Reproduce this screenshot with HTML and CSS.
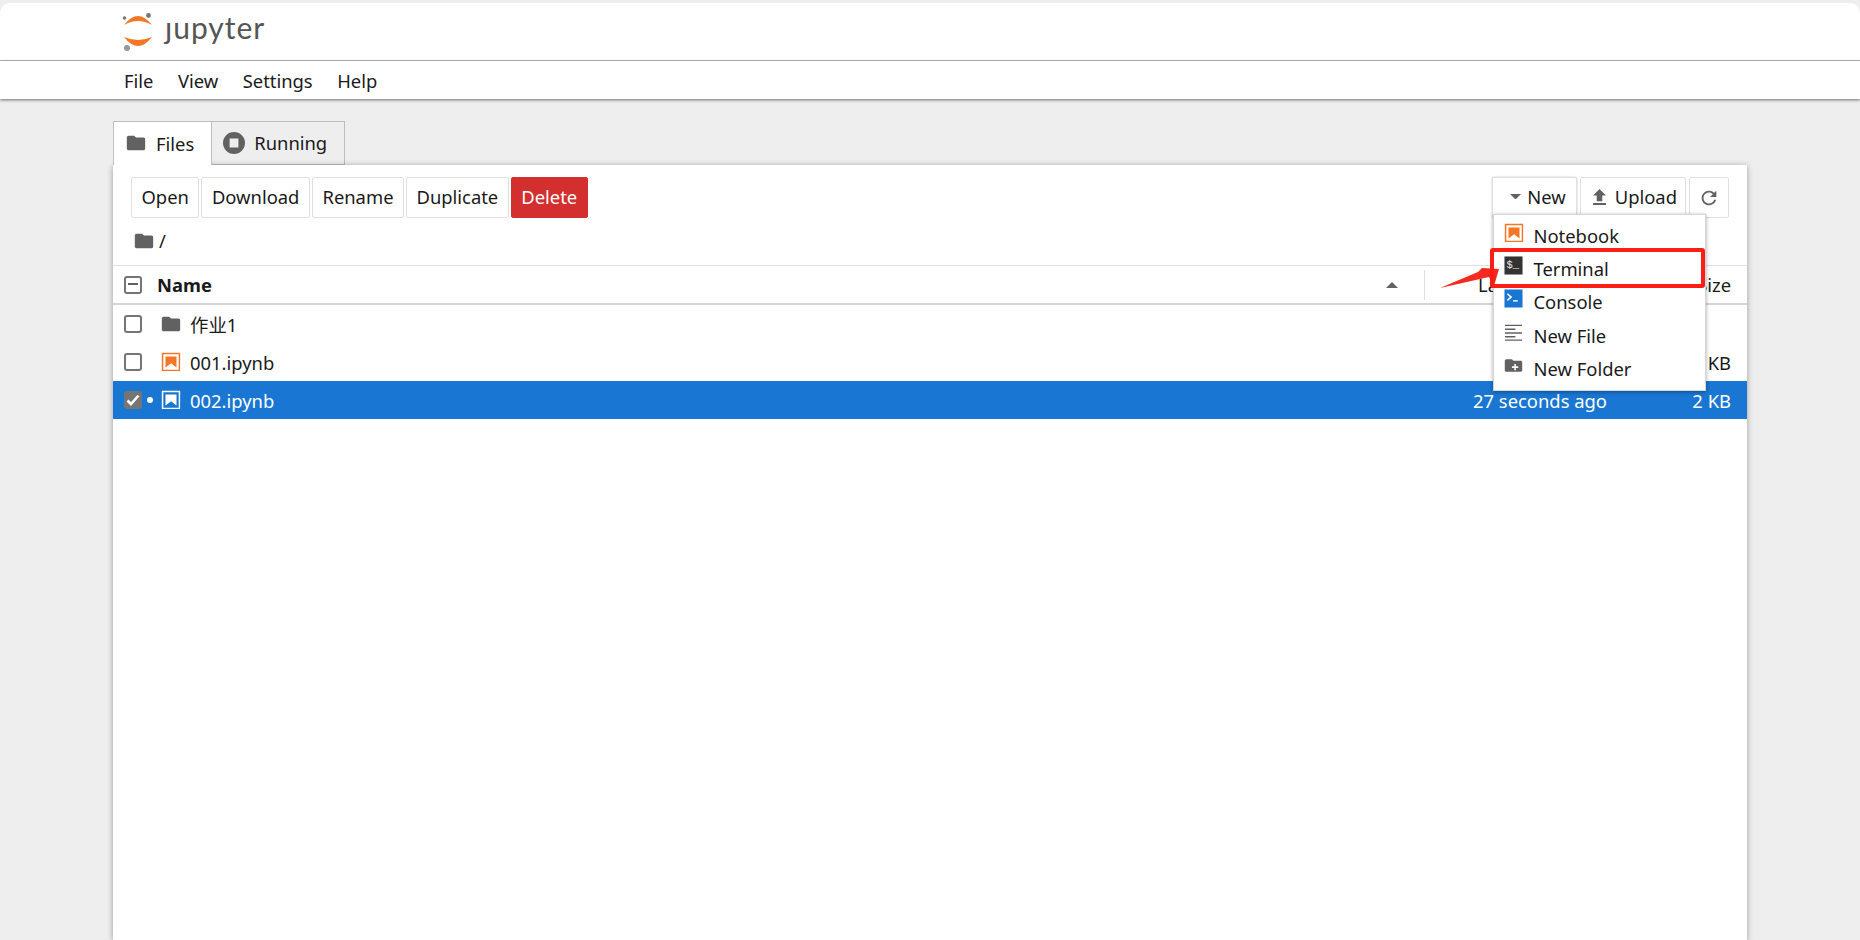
FILE: index.html
```html
<!DOCTYPE html>
<html lang="en">
<head>
    <meta charset="UTF-8">
    <title>Home</title>
    <link rel="stylesheet" href="styles.css">
</head>
<body>
    <svg class="defs" width="0" height="0">
        <symbol id="i-folder" viewBox="0 0 24 24"><path d="M10 4H4c-1.1 0-2 .9-2 2v12c0 1.1.9 2 2 2h16c1.1 0 2-.9 2-2V8c0-1.1-.9-2-2-2h-8l-2-2z"/></symbol>
        <symbol id="i-notebook" viewBox="0 0 22 22"><path d="M18.7 3.3v15.4H3.3V3.3h15.4m1.5-1.5H1.8v18.3h18.3l.1-18.3z"/><path d="M16.5 16.5l-5.4-4.3-5.6 4.3v-11h11z"/></symbol>
    </svg>

    <header class="topbar">
        <div class="logo">
            <svg class="logo-mark" viewBox="0 0 32 38" width="32" height="38">
                <path fill="#f37726" d="M2 12Q16 -6 30 12Q16 4 2 12z"/>
                <path fill="#f37726" d="M2 24Q16 42 30 24Q16 30 2 24z"/>
                <circle cx="26.500" cy="2.500" r="2.400" fill="#767677"/>
                <circle cx="2.500" cy="5" r="1.700" fill="#767677"/>
                <circle cx="5" cy="35" r="3" fill="#989798"/>
            </svg>
            <span class="logo-text">ȷupyter</span>
        </div>
    </header>
    <nav class="menubar">
        <span>File</span>
        <span>View</span>
        <span>Settings</span>
        <span>Help</span>
    </nav>

    <main class="content">
        <div class="tabs">
            <div class="tab active">
                <svg class="icon"><use href="#i-folder"/></svg>
                Files
            </div>
            <div class="tab">
                <svg class="icon" viewBox="2 2 20 20"><path d="M12 2a10 10 0 1 0 0 20 10 10 0 0 0 0-20zm-4 6h8v8H8z" fill-rule="evenodd"/></svg>
                Running
            </div>
        </div>

        <section class="panel">
            <div class="toolbar">
                <div class="btn-group">
                    <button class="btn">Open</button>
                    <button class="btn">Download</button>
                    <button class="btn">Rename</button>
                    <button class="btn">Duplicate</button>
                    <button class="btn danger">Delete</button>
                </div>
                <div class="btn-group">
                    <button class="btn new-btn"><svg class="caret" viewBox="0 0 10 5"><path d="M0 0h10L5 5z"/></svg>New</button>
                    <button class="btn upload-btn"><svg class="icon upload-icon" viewBox="5 3 14 17"><path d="M9 16h6v-6h4l-7-7-7 7h4zm-4 2h14v2H5z"/></svg>Upload</button>
                    <button class="btn refresh"><svg class="icon" viewBox="0 0 24 24"><path d="M17.650 6.350C16.200 4.900 14.210 4 12 4c-4.420 0-8 3.580-8 8s3.580 8 8 8c3.730 0 6.840-2.550 7.730-6h-2.080c-.82 2.330-3.040 4-5.650 4-3.310 0-6-2.690-6-6s2.690-6 6-6c1.660 0 3.140.69 4.220 1.780L13 11h7V4l-2.350 2.350z"/></svg></button>
                </div>
            </div>

            <div class="crumbs">
                <svg class="icon"><use href="#i-folder"/></svg>
                <span>/</span>
            </div>

            <div class="list-head">
                <span class="check minus"></span>
                <span class="col-name">Name</span>
                <svg class="caret sort" viewBox="0 0 10 5"><path d="M5 0l5 5H0z"/></svg>
                <span class="col-modified">Last Modified</span>
                <span class="col-size">File Size</span>
            </div>

            <div class="row">
                <span class="check"></span>
                <span class="dot"></span>
                <svg class="icon file-icon"><use href="#i-folder"/></svg>
                <span class="col-name">作业1</span>
            </div>
            <div class="row">
                <span class="check"></span>
                <span class="dot"></span>
                <svg class="icon file-icon nb"><use href="#i-notebook"/></svg>
                <span class="col-name">001.ipynb</span>
                <span class="col-size">2 KB</span>
            </div>
            <div class="row selected">
                <span class="check checked">
                    <svg viewBox="0 0 14 14"><path d="M1.500 7.500l3.500 3.500 7.500-8.500" fill="none" stroke="#fff" stroke-width="2.600"/></svg>
                </span>
                <span class="dot"></span>
                <svg class="icon file-icon"><use href="#i-notebook"/></svg>
                <span class="col-name">002.ipynb</span>
                <span class="col-modified">27 seconds ago</span>
                <span class="col-size">2 KB</span>
            </div>

            <ul class="dropdown">
                <li>
                    <svg class="menu-icon nb"><use href="#i-notebook"/></svg>
                    Notebook
                </li>
                <li>
                    <svg class="menu-icon" viewBox="0 0 20 20">
                        <rect x="0.500" y="0.500" width="19" height="19" fill="#333"/>
                        <text x="2.500" y="13" class="term-text">$_</text>
                    </svg>
                    Terminal
                </li>
                <li>
                    <svg class="menu-icon" viewBox="0 0 20 20">
                        <rect x="0.500" y="0.500" width="19" height="19" fill="#1976d2"/>
                        <path d="M3.500 5l4 3.500-4 3.500" fill="none" stroke="#fff" stroke-width="1.600"/>
                        <path d="M9.500 12.500h5" stroke="#fff" stroke-width="1.500"/>
                    </svg>
                    Console
                </li>
                <li>
                    <svg class="menu-icon" viewBox="0 0 20 20">
                        <path d="M1 2.500h18M1 6.500h11M1 10.500h18M1 14.500h11M1 18h18" stroke="#616161" stroke-width="1.500"/>
                    </svg>
                    New File
                </li>
                <li>
                    <svg class="menu-icon" viewBox="0 0 24 24">
                        <path d="M10 4H3C1.900 4 1 4.900 1 6v12c0 1.100.9 2 2 2h18c1.100 0 2-.9 2-2V8c0-1.100-.9-2-2-2H12l-2-2zm3 6h2v3h3v2h-3v3h-2v-3h-3v-2h3z" fill="#616161" fill-rule="evenodd"/>
                    </svg>
                    New Folder
                </li>
            </ul>

            <svg class="callout-arrow" viewBox="0 0 60 22" width="60" height="22">
                <path d="M0 22L38 6 42 2 59 3 54 20 49 11z" fill="#f5291f"/>
            </svg>
            <div class="callout"></div>
        </section>
    </main>
</body>
</html>
```

FILE: styles.css
```css
* {
    box-sizing: border-box;
}
html, body {
    height: 100%;
}
body {
    margin: 0;
    padding-top: 3px;
    background-color: #eeeeee;
    color: #1a1a1a;
    font-family: 'Noto Sans', 'Noto Sans CJK SC', sans-serif;
    font-size: 18.400px;
    display: flex;
    flex-direction: column;
    overflow: hidden;
}
.defs {
    position: absolute;
}
.topbar {
    height: 58px;
    background-color: #ffffff;
    border-bottom: 1px solid #bdbdbd;
    border-radius: 10px 10px 0 0;
    padding-left: 122px;
    flex-shrink: 0;
}
.logo {
    display: flex;
    align-items: center;
    height: 57px;
}
.logo-text {
    font-family: 'Lato', sans-serif;
    font-size: 30px;
    color: #555555;
    letter-spacing: 1px;
    margin: 0 0 10px 11px;
}
.menubar {
    height: 38px;
    background-color: #ffffff;
    padding-left: 124px;
    display: flex;
    align-items: center;
    gap: 24.500px;
    box-shadow: 0 1px 3px rgba(0, 0, 0, 0.55);
    flex-shrink: 0;
    position: relative;
}
.content {
    flex: 1;
    padding: 22px 113px 0 113px;
    display: flex;
    flex-direction: column;
    min-height: 0;
}
.tabs {
    display: flex;
    height: 44px;
    flex-shrink: 0;
}
.tab {
    display: flex;
    align-items: center;
    gap: 9px;
    padding: 0 17px 1px 11px;
    border: 1px solid #bdbdbd;
    border-left-width: 0;
    background-color: #eeeeee;
}
.tab:first-child {
    border-left-width: 1px;
}
.tab.active {
    background-color: #ffffff;
    border-bottom: 0;
    position: relative;
    z-index: 1;
}
.icon {
    width: 22px;
    height: 22px;
    fill: #616161;
    flex-shrink: 0;
}
.panel {
    flex: 1;
    position: relative;
    background-color: #ffffff;
    box-shadow: 0 1px 6px rgba(0, 0, 0, 0.35);
}
.toolbar {
    display: flex;
    justify-content: space-between;
    padding: 12px 18px 0 18px;
}
.btn-group {
    display: flex;
    gap: 2px;
}
.btn {
    height: 41px;
    padding: 0 9.500px 2px;
    background-color: #ffffff;
    border: 1px solid #e0e0e0;
    border-radius: 2px;
    font: inherit;
    color: inherit;
    display: flex;
    align-items: center;
}
.btn.danger {
    background-color: #d32f2f;
    border-color: #d32f2f;
    color: #ffffff;
}
.btn-group:last-child {
    gap: 3px;
}
.new-btn {
    padding: 0 10px 2px 17px;
    box-shadow: 0 0 2px rgba(0, 0, 0, 0.25);
    gap: 6px;
}
.upload-btn {
    padding: 0 8px 2px 12px;
    gap: 9px;
}
.upload-icon {
    width: 13px;
    height: 16px;
}
.refresh {
    padding: 0 8px;
}
.caret {
    width: 11px;
    height: 5.500px;
    fill: #616161;
}
.crumbs {
    display: flex;
    align-items: center;
    gap: 4px;
    height: 47px;
    padding: 0 0 2px 20px;
}
.list-head, .row {
    display: flex;
    align-items: center;
    padding: 0 16px 0 11px;
}
.list-head {
    height: 40px;
    border-top: 1px solid #e0e0e0;
    border-bottom: 2px solid #d5d5d5;
}
.list-head .col-name {
    font-weight: 700;
    margin-left: 15px;
    flex: 1;
}
.sort {
    width: 12px;
    height: 6px;
    margin-right: 26px;
}
.list-head .col-modified {
    border-left: 1px solid #e0e0e0;
    height: 30px;
    line-height: 30px;
    padding-left: 53px;
    width: 257px;
}
.list-head .col-size {
    width: 50px;
    white-space: nowrap;
    direction: rtl;
}
.row {
    height: 38px;
}
.row .col-name {
    flex: 1;
    margin-left: 8px;
}
.row .col-modified {
    width: 250px;
    text-align: right;
}
.row .col-size {
    width: 124px;
    text-align: right;
}
.check {
    width: 18px;
    height: 18px;
    border: 2px solid #757575;
    border-radius: 3px;
    flex-shrink: 0;
    position: relative;
}
.check.minus::after {
    content: "";
    position: absolute;
    left: 2px;
    right: 2px;
    top: 5px;
    height: 2px;
    background-color: #616161;
}
.check.checked {
    background-color: #757575;
    border-color: #757575;
}
.check.checked svg {
    display: block;
    width: 14px;
    height: 14px;
}
.dot {
    width: 8px;
    height: 8px;
    margin: 0 6px 0 4px;
}
.selected {
    background-color: #1976d2;
    color: #ffffff;
}
.selected .dot {
    border: 2px solid #ffffff;
    background-color: #ffffff;
    border-radius: 50%;
    width: 6px;
    height: 6px;
    margin: 0 7px 0 5px;
}
.file-icon.nb, .menu-icon.nb {
    fill: #f37726;
}
.selected .file-icon {
    fill: #ffffff;
}
.dropdown {
    position: absolute;
    left: 1380px;
    top: 49px;
    width: 213px;
    height: 177px;
    margin: 0;
    padding: 4px 0;
    list-style: none;
    background-color: #ffffff;
    border: 1px solid #d5d5d5;
    box-shadow: 0 1px 4px rgba(0, 0, 0, 0.35);
}
.dropdown li {
    display: flex;
    align-items: center;
    gap: 10.500px;
    height: 33.200px;
    padding-left: 10px;
}
.menu-icon {
    width: 19px;
    height: 19px;
    flex-shrink: 0;
    margin-top: -6px;
}
.menu-icon.nb {
    width: 22px;
    height: 22px;
    margin-left: -1.500px;
    margin-right: -1.500px;
}
.term-text {
    font-family: 'Liberation Mono', monospace;
    font-size: 11px;
    fill: #eeeeee;
}
.callout {
    position: absolute;
    left: 1377px;
    top: 83px;
    width: 215px;
    height: 40px;
    border: 4px solid #fa1e14;
    border-radius: 3px;
}
.callout-arrow {
    position: absolute;
    left: 1327px;
    top: 101px;
}
```
